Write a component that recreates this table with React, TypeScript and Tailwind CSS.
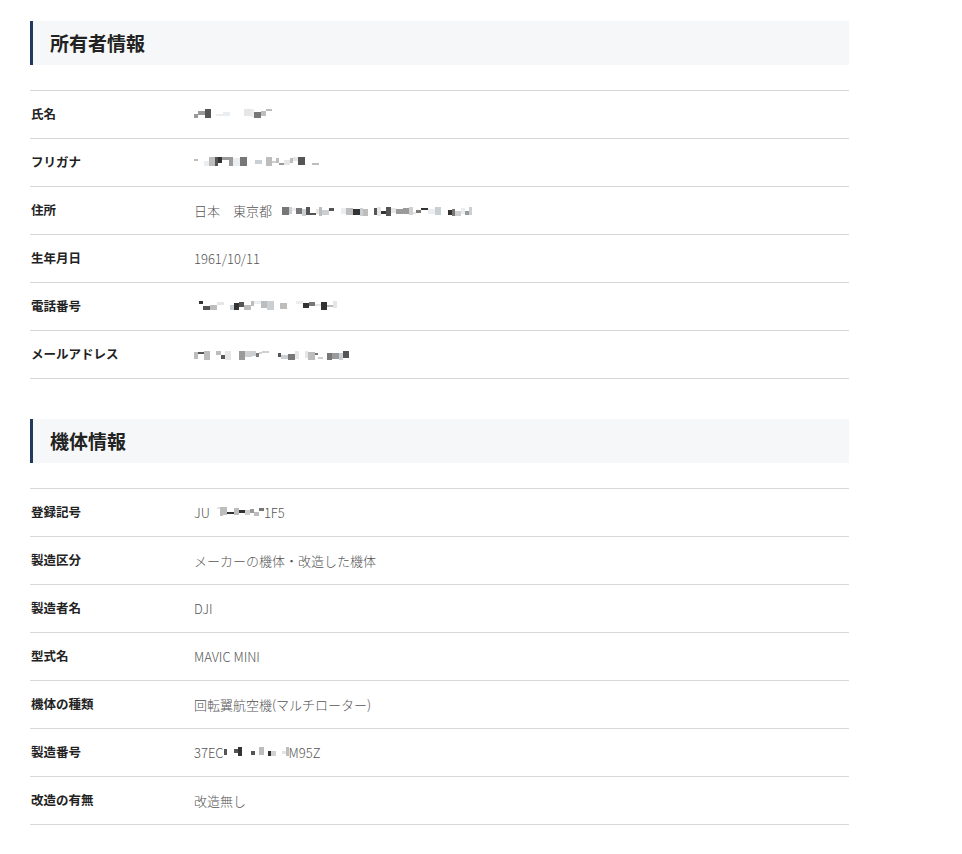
import React from "react";

type Block = { w: number; h: number; y: number; c: string; gap: number };

function makeBlocks(seed: number, count: number): Block[] {
  let s = seed;
  const rnd = () => {
    s = (s * 9301 + 49297) % 233280;
    return s / 233280;
  };
  const greys = ["#e6e6e6", "#d0d0d0", "#bdbdbd", "#9a9a9a", "#777", "#555", "#333", "#eaeef0", "#c9cfd3"];
  const out: Block[] = [];
  for (let i = 0; i < count; i++) {
    const h = 2 + Math.floor(rnd() * 8);
    out.push({
      w: 3 + Math.floor(rnd() * 5),
      h,
      y: Math.floor(rnd() * (10 - h)),
      c: greys[Math.floor(rnd() * greys.length)],
      gap: rnd() < 0.2 ? 4 + Math.floor(rnd() * 6) : 0,
    });
  }
  return out;
}

function Mosaic({ seed, count }: { seed: number; count: number }) {
  const blocks = makeBlocks(seed, count);
  return (
    <span className="inline-flex h-[11px] items-start align-middle">
      {blocks.map((b, i) => (
        <span
          key={i}
          className="block"
          style={{ width: b.w, height: b.h, marginTop: b.y, marginLeft: b.gap, background: b.c }}
        />
      ))}
    </span>
  );
}

type Row = { label: string; value: React.ReactNode };

function Section({ title, rows }: { title: string; rows: Row[] }) {
  return (
    <section className="w-[819px]">
      <h2 className="flex h-[44px] items-center border-l-[3px] border-[#1f3a5c] bg-[#f6f7f8] pl-[17px] text-[19px] font-bold text-[#222]">
        {title}
      </h2>
      <div className="mt-[25px] border-t border-[#d8d8d8]">
        {rows.map((r) => (
          <div key={r.label} className="flex h-[48px] items-center border-b border-[#d8d8d8]">
            <div className="w-[164px] pl-px text-[12.5px] font-bold text-[#222]">{r.label}</div>
            <div className="text-[13px] font-light text-[#555]">{r.value}</div>
          </div>
        ))}
      </div>
    </section>
  );
}

export default function App() {
  const owner: Row[] = [
    {
      label: "氏名",
      value: (
        <span className="flex items-center gap-[14px]">
          <Mosaic seed={3} count={5} />
          <Mosaic seed={11} count={5} />
        </span>
      ),
    },
    {
      label: "フリガナ",
      value: (
        <span className="flex items-center gap-[8px]">
          <Mosaic seed={21} count={9} />
          <Mosaic seed={29} count={10} />
        </span>
      ),
    },
    {
      label: "住所",
      value: (
        <span className="flex items-center">
          <span>日本　東京都</span>
          <span className="ml-[10px]">
            <Mosaic seed={41} count={36} />
          </span>
        </span>
      ),
    },
    { label: "生年月日", value: "1961/10/11" },
    {
      label: "電話番号",
      value: (
        <span className="flex items-center gap-[6px]">
          <Mosaic seed={51} count={4} />
          <Mosaic seed={57} count={16} />
        </span>
      ),
    },
    { label: "メールアドレス", value: <Mosaic seed={63} count={24} /> },
  ];

  const machine: Row[] = [
    {
      label: "登録記号",
      value: (
        <span className="flex items-center">
          <span>JU</span>
          <Mosaic seed={71} count={10} />
          <span>1F5</span>
        </span>
      ),
    },
    { label: "製造区分", value: "メーカーの機体・改造した機体" },
    { label: "製造者名", value: "DJI" },
    { label: "型式名", value: "MAVIC MINI" },
    { label: "機体の種類", value: "回転翼航空機(マルチローター)" },
    {
      label: "製造番号",
      value: (
        <span className="flex items-center">
          <span>37EC</span>
          <Mosaic seed={83} count={9} />
          <span>M95Z</span>
        </span>
      ),
    },
    { label: "改造の有無", value: "改造無し" },
  ];

  return (
    <div
      className="min-h-[854px] bg-white pl-[30px] pt-[21px]"
      style={{ fontFamily: '"Noto Sans CJK JP", "Noto Sans", sans-serif' }}
    >
      <Section title="所有者情報" rows={owner} />
      <div className="h-[40px]" />
      <Section title="機体情報" rows={machine} />
    </div>
  );
}
